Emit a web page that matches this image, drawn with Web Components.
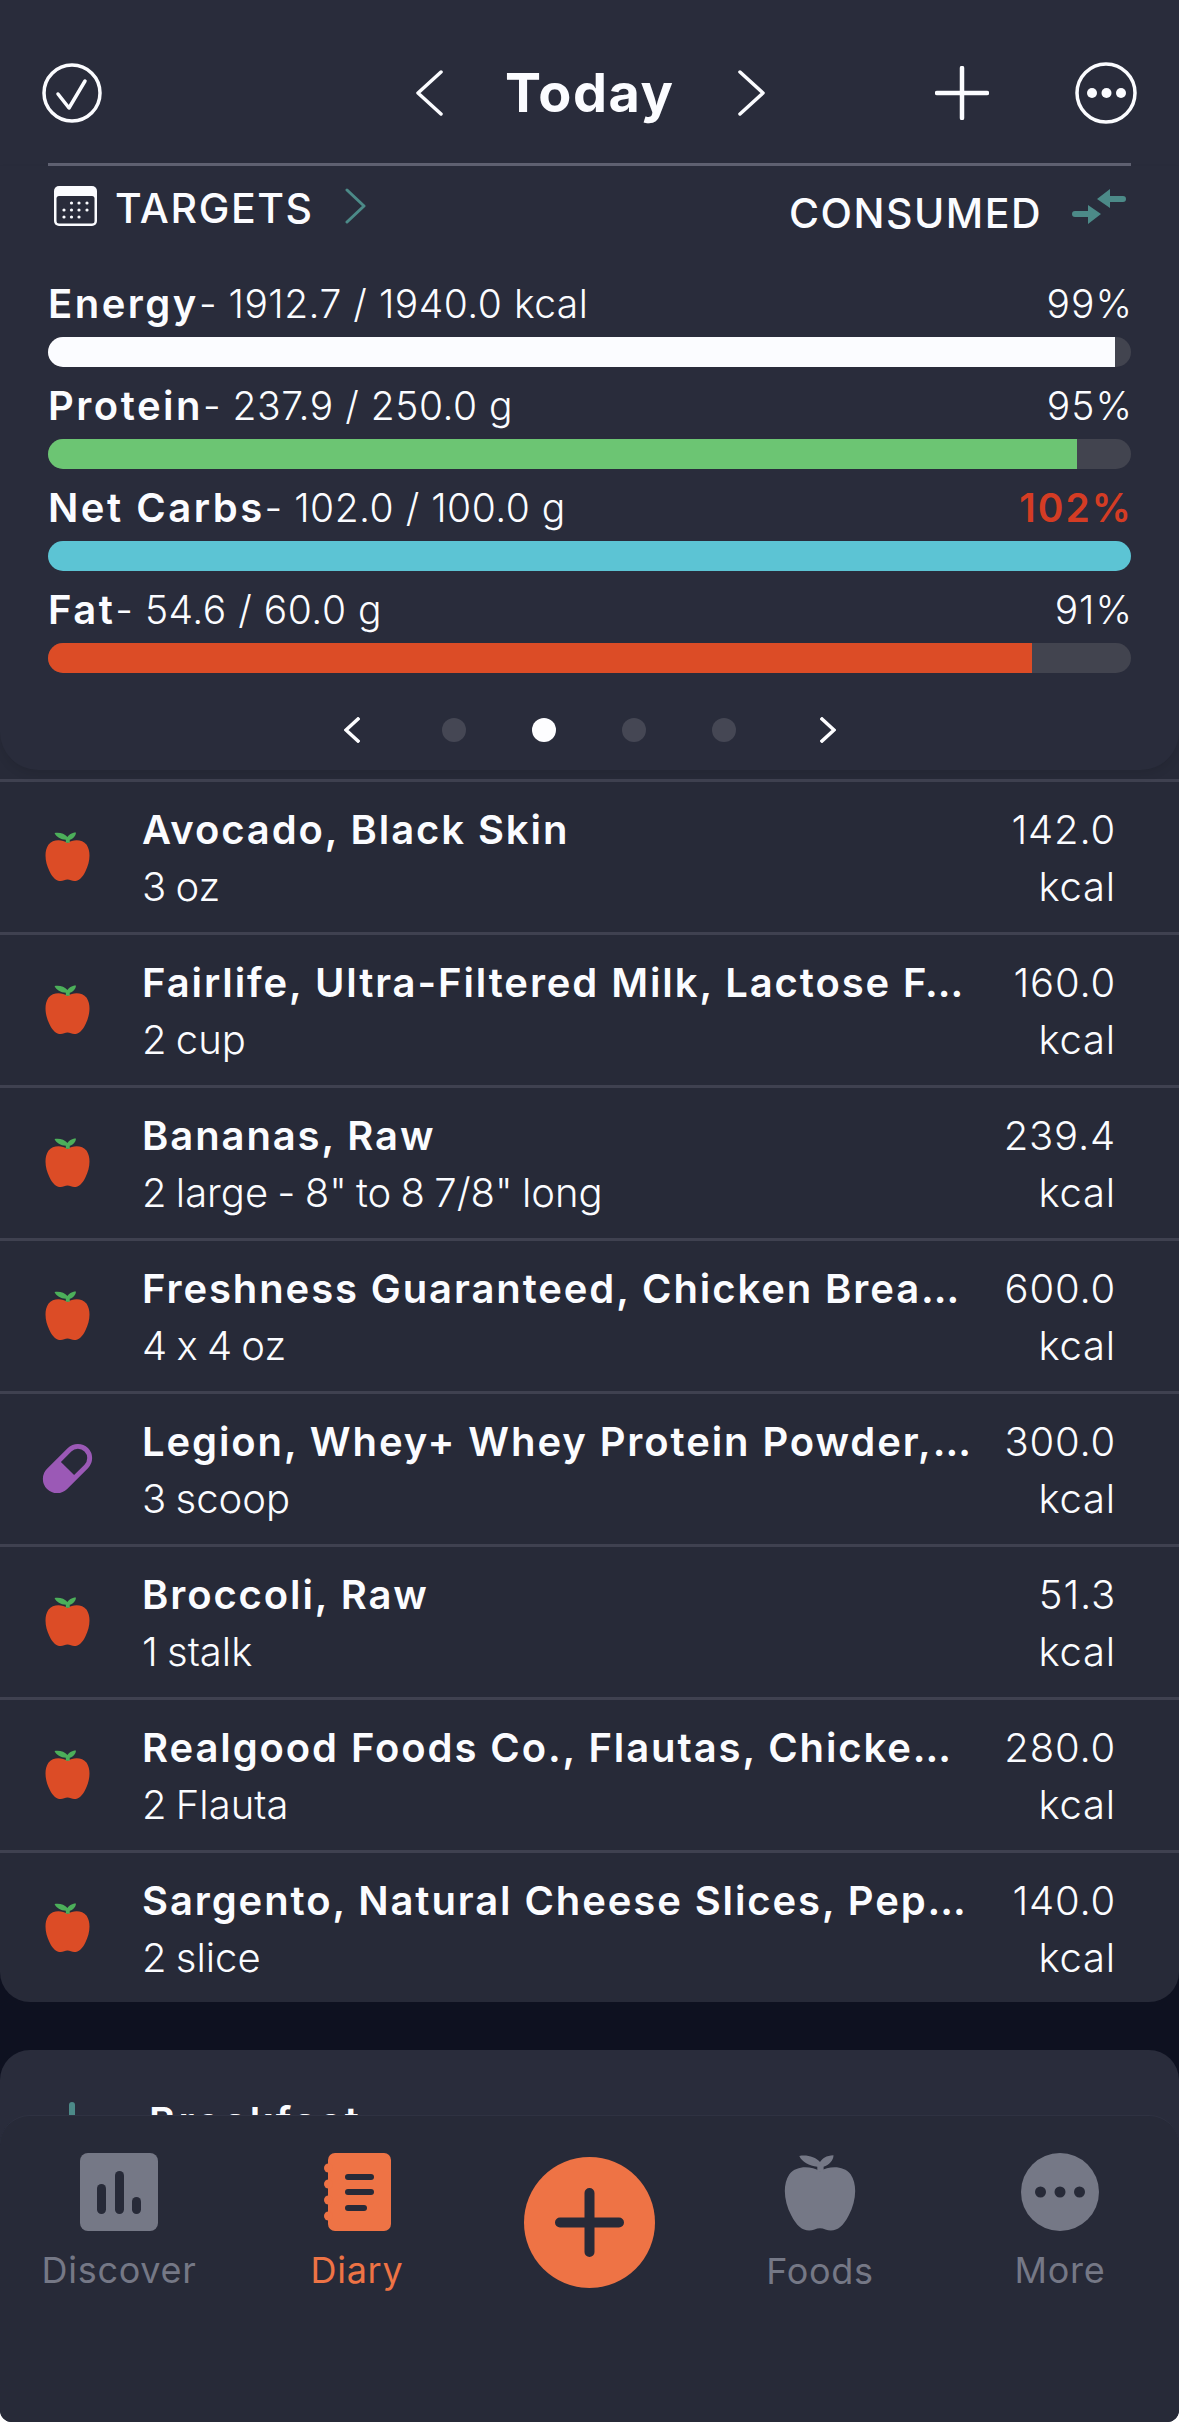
<!DOCTYPE html>
<html>
<head>
<meta charset="utf-8">
<title>Diary</title>
<style>
    html, body { margin: 0; padding: 0; background: #fff; }
    body { font-family: Inter, "Liberation Sans", sans-serif; color: #fbfcff; font-feature-settings: "calt" 0; }
</style>
</head>
<body>

<diary-app>
    <diary-header></diary-header>
    <macro-panel>
        <macro-row name="Energy" amount="1912.7 / 1940.0 kcal" percent="99%" fill="#fbfcff" value="1067"></macro-row>
        <macro-row name="Protein" amount="237.9 / 250.0 g" percent="95%" fill="#6cc573" value="1029"></macro-row>
        <macro-row name="Net Carbs" amount="102.0 / 100.0 g" percent="102%" fill="#5cc4d4" value="1083" over></macro-row>
        <macro-row name="Fat" amount="54.6 / 60.0 g" percent="91%" fill="#dc4c26" value="984"></macro-row>
    </macro-panel>
    <food-list>
        <food-row name="Avocado, Black Skin" serving="3 oz" kcal="142.0"></food-row>
        <food-row name="Fairlife, Ultra-Filtered Milk, Lactose F…" serving="2 cup" kcal="160.0"></food-row>
        <food-row name="Bananas, Raw" serving='2 large - 8" to 8 7/8" long' kcal="239.4"></food-row>
        <food-row name="Freshness Guaranteed, Chicken Brea…" serving="4 x 4 oz" kcal="600.0"></food-row>
        <food-row name="Legion, Whey+ Whey Protein Powder,…" serving="3 scoop" kcal="300.0" kind="pill"></food-row>
        <food-row name="Broccoli, Raw" serving="1 stalk" kcal="51.3"></food-row>
        <food-row name="Realgood Foods Co., Flautas, Chicke…" serving="2 Flauta" kcal="280.0"></food-row>
        <food-row name="Sargento, Natural Cheese Slices, Pep…" serving="2 slice" kcal="140.0"></food-row>
    </food-list>
    <meal-card>Breakfast</meal-card>
    <tab-bar slot="nav">
        <tab-item label="Discover" icon="discover"></tab-item>
        <tab-item label="Diary" icon="diary" active></tab-item>
        <add-button></add-button>
        <tab-item label="Foods" icon="foods"></tab-item>
        <tab-item label="More" icon="more"></tab-item>
    </tab-bar>
</diary-app>

<script>
const APPLE_BODY = "M20 12C15 8.500 7 8 3 14C-1 21 0 32 4 41C7 48 10 51 14 51C16 51 18 49.500 20 49.500C22 49.500 24 51 26 51C30 51 33 48 36 41C40 32 41 21 37 14C33 8 25 8.500 20 12Z";
const APPLE_LEAF = "M18.500 12V9C14 8.500 10 6 8.500 2C12.500 1 17.500 2.500 20 6C21 4 23.500 1.500 27.500 1.500C27.500 5 25 8 22 9V12Z";

const ICONS = {
    discover: `<svg width="78" height="78" viewBox="0 0 78 78"><rect width="78" height="78" rx="8" fill="currentColor"/><g fill="#272a38"><rect x="17" y="31" width="9" height="30" rx="4.500"/><rect x="35" y="18" width="9" height="43" rx="4.500"/><rect x="52" y="44" width="9" height="17" rx="4.500"/></g></svg>`,
    diary: `<svg width="67" height="78" viewBox="0 0 67 78"><rect x="4" width="63" height="78" rx="7" fill="currentColor"/><g fill="currentColor"><circle cx="4.500" cy="15" r="4.500"/><circle cx="4.500" cy="31" r="4.500"/><circle cx="4.500" cy="47" r="4.500"/><circle cx="4.500" cy="63" r="4.500"/></g><g fill="#272a38"><rect x="21" y="21" width="29" height="6" rx="3"/><rect x="21" y="36" width="29" height="6" rx="3"/><rect x="21" y="52" width="22" height="6" rx="3"/></g></svg>`,
    foods: `<svg width="72" height="79" viewBox="0 0 40 52" preserveAspectRatio="none"><path fill="currentColor" d="${APPLE_BODY}"/><path fill="currentColor" d="${APPLE_LEAF}"/></svg>`,
    more: `<svg width="78" height="78" viewBox="0 0 78 78"><circle cx="39" cy="39" r="39" fill="currentColor"/><g fill="#272a38"><circle cx="19.500" cy="39" r="5.500"/><circle cx="39" cy="39" r="5.500"/><circle cx="58.500" cy="39" r="5.500"/></g></svg>`
};

class DiaryApp extends HTMLElement {
    constructor () {
        super ();
        this.attachShadow ({mode: "open"});
        this.shadowRoot.innerHTML = `
<style>
    :host {
        display: flex;
        flex-direction: column;
        height: 2422px;
        overflow: hidden;
        background: #0e1120;
        border-radius: 0 0 12px 12px;
    }
    #content {
        flex: 1;
        min-height: 0;
        overflow: hidden;
    }
</style>
<div id="content"><slot></slot></div>
<slot name="nav"></slot>
`;
    }
}

class DiaryHeader extends HTMLElement {
    constructor () {
        super ();
        this.attachShadow ({mode: "open"});
        this.shadowRoot.innerHTML = `
<style>
    :host {
        display: block;
        background: #292c3b;
        padding: 62px 42px 0 42px;
    }
    #top {
        display: flex;
        align-items: center;
        height: 62px;
    }
    #back { margin-left: 314px; }
    #today {
        font-size: 54px;
        font-weight: 700;
        letter-spacing: 1.5px;
        line-height: 62px;
        width: 169px;
        margin: 0 63px 0 62px;
        text-align: center;
        white-space: nowrap;
    }
    #plus { margin-left: 170px; }
    #more { margin-left: 86px; }
    svg { display: block; flex: none; }
    #rule {
        height: 3px;
        background: #5f6171;
        margin: 39px 6px 0 6px;
    }
</style>
<div id="top">
    <svg width="60" height="60" viewBox="0 0 60 60" fill="none" stroke="#fbfcff" stroke-width="3.500" stroke-linecap="round" stroke-linejoin="round"><circle cx="30" cy="30" r="28"/><path d="M16 31L27 45L43 18"/></svg>
    <svg id="back" width="27" height="46" viewBox="0 0 27 46" fill="none" stroke="#fbfcff" stroke-width="3.500" stroke-linecap="round" stroke-linejoin="round"><path d="M25 2L2 23L25 44"/></svg>
    <span id="today">Today</span>
    <svg width="28" height="46" viewBox="0 0 28 46" fill="none" stroke="#fbfcff" stroke-width="3.500" stroke-linecap="round" stroke-linejoin="round"><path d="M3 2L26 23L3 44"/></svg>
    <svg id="plus" width="54" height="54" viewBox="0 0 54 54" fill="none" stroke="#fbfcff" stroke-width="4.500" stroke-linecap="round"><path d="M27 2V52M2 27H52"/></svg>
    <svg id="more" width="62" height="62" viewBox="0 0 62 62"><circle cx="31" cy="31" r="29" fill="none" stroke="#fbfcff" stroke-width="3.500"/><g fill="#fbfcff"><circle cx="17" cy="31" r="5"/><circle cx="31.500" cy="31" r="5"/><circle cx="46" cy="31" r="5"/></g></svg>
</div>
<div id="rule"></div>
`;
    }
}

class MacroPanel extends HTMLElement {
    constructor () {
        super ();
        this.attachShadow ({mode: "open"});
        this.shadowRoot.innerHTML = `
<style>
    :host {
        display: block;
        position: relative;
        z-index: 1;
        background: #292c3b;
        padding: 0 48px;
        height: 604px;
        box-sizing: border-box;
        border-radius: 0 0 38px 38px;
        box-shadow: 0 5px 8px rgba(0, 0, 0, 0.08);
    }
    #heads {
        display: flex;
        justify-content: space-between;
        height: 108px;
    }
    #targets, #consumed {
        display: flex;
        align-items: center;
        font-size: 41px;
        font-weight: 500;
        line-height: 48px;
        height: 48px;
        letter-spacing: 1.6px;
    }
    #targets { margin: 18px 0 0 6px; }
    #targets span { margin: 0 31px 0 18px; }
    #targets svg { margin-top: -4px; }
    #consumed { margin: 23px 5px 0 0; letter-spacing: 1.5px; }
    #consumed svg { margin: -14px 0 0 30px; }
    svg { display: block; flex: none; }
    #rows {
        display: flex;
        flex-direction: column;
        gap: 9px;
    }
    #pager {
        display: flex;
        align-items: center;
        height: 26px;
        margin: 44px 0 0 296px;
    }
    .dot {
        width: 24px;
        height: 24px;
        border-radius: 50%;
        background: #454754;
        margin-right: 66px;
    }
    .dot.on { background: #fdfdff; }
</style>
<div id="heads">
    <div id="targets">
        <svg width="43" height="40" viewBox="0 0 43 40"><rect width="43" height="40" rx="5" fill="#fbfcff"/><rect x="2.500" y="10" width="38" height="27.500" rx="2.500" fill="#292c3b"/><g fill="#fbfcff"><circle cx="17.500" cy="17" r="1.600"/><circle cx="25" cy="17" r="1.600"/><circle cx="33" cy="17" r="1.600"/><circle cx="10" cy="24" r="1.600"/><circle cx="17.500" cy="24" r="1.600"/><circle cx="25" cy="24" r="1.600"/><circle cx="33" cy="24" r="1.600"/><circle cx="10" cy="31" r="1.600"/><circle cx="17.500" cy="31" r="1.600"/><circle cx="25" cy="31" r="1.600"/></g></svg>
        <span>TARGETS</span>
        <svg width="21" height="36" viewBox="0 0 21 36" fill="none" stroke="#4c8a88" stroke-width="3" stroke-linecap="round" stroke-linejoin="round"><path d="M2 2L19 18L2 34"/></svg>
    </div>
    <div id="consumed">
        <span>CONSUMED</span>
        <svg width="54" height="35" viewBox="0 0 54 35" fill="#4c8a88"><path d="M25 10L38 0V7H51A3 3 0 0 1 51 13H38V19Z"/><path d="M29 25L16 16V22H3A3 3 0 0 0 3 28H16V35Z"/></svg>
    </div>
</div>
<div id="rows"><slot></slot></div>
<div id="pager">
    <svg style="margin-right:82px" width="16" height="26" viewBox="0 0 16 26" fill="none" stroke="#fdfdff" stroke-width="3.500" stroke-linecap="square"><path d="M14 2L2 13L14 24"/></svg>
    <div class="dot"></div>
    <div class="dot on"></div>
    <div class="dot"></div>
    <div class="dot"></div>
    <svg style="margin-left:18px" width="16" height="26" viewBox="0 0 16 26" fill="none" stroke="#fdfdff" stroke-width="3.500" stroke-linecap="square"><path d="M2 2L14 13L2 24"/></svg>
</div>
`;
    }
}

class MacroRow extends HTMLElement {
    constructor () {
        super ();
        this.attachShadow ({mode: "open"});
    }

    connectedCallback () {
        const over = this.hasAttribute ("over");
        const value = this.getAttribute ("value");
        this.shadowRoot.innerHTML = `
<style>
    :host { display: block; }
    #label {
        display: flex;
        align-items: baseline;
        font-size: 39px;
        line-height: 60px;
        font-weight: 300;
        white-space: pre;
    }
    b { font-size: 40px; font-weight: 600; letter-spacing: 2.5px; }
    #amount { letter-spacing: 0.5px; }
    #percent { margin-left: auto; margin-right: -2px; letter-spacing: 1px; }
    #percent.over { color: #d43c24; font-weight: 600; letter-spacing: 2px; }
    #track {
        height: 30px;
        margin-top: 3px;
        border-radius: 15px;
        background: #42444f;
        overflow: hidden;
    }
    #fill {
        height: 100%;
        width: ${value}px;
        background: ${this.getAttribute ("fill")};
    }
</style>
<div id="label"><b>${this.getAttribute ("name")}</b><span id="amount">- ${this.getAttribute ("amount")}</span><span id="percent" class="${over ? "over" : ""}">${this.getAttribute ("percent")}</span></div>
<div id="track"><div id="fill"></div></div>
`;
    }
}

class FoodList extends HTMLElement {
    constructor () {
        super ();
        this.attachShadow ({mode: "open"});
        this.shadowRoot.innerHTML = `
<style>
    :host {
        display: block;
        margin-top: -40px;
        padding-top: 49px;
        background: #272a38;
        border-radius: 0 0 30px 30px;
        overflow: hidden;
    }
    ::slotted(food-row:last-child) { height: 152px; }
</style>
<slot></slot>
`;
    }
}

class FoodRow extends HTMLElement {
    constructor () {
        super ();
        this.attachShadow ({mode: "open"});
    }

    connectedCallback () {
        const icon = this.getAttribute ("kind") == "pill"
            ? `<svg style="margin-left:-3px" width="51" height="51" viewBox="0 0 52 52"><g transform="rotate(-45 26 26)"><rect x="-3.500" y="11.500" width="59" height="29" rx="14.500" fill="#9b59b6"/><path d="M26 16.500H41A9.500 9.500 0 0 1 41 35.500H26Z" fill="#272a38"/></g></svg>`
            : `<svg width="45" height="51" viewBox="0 0 40 52" preserveAspectRatio="none"><path fill="#dc4c26" d="${APPLE_BODY}"/><path fill="#4caf5a" d="${APPLE_LEAF}"/></svg>`;
        this.shadowRoot.innerHTML = `
<style>
    :host {
        display: flex;
        align-items: flex-start;
        box-sizing: border-box;
        height: 153px;
        padding: 19px 64px 0 45px;
        border-top: 3px solid #3f4150;
        line-height: 57px;
        font-size: 40px;
    }
    #icon {
        flex: none;
        width: 97px;
        margin-top: 30px;
    }
    #icon svg { display: block; }
    #text { flex: 1; min-width: 0; white-space: nowrap; }
    #name { font-weight: 600; letter-spacing: 1.9px; }
    #serving, #kcal { font-weight: 300; }
    #serving { word-spacing: -2px; }
    #kcal { flex: none; text-align: right; letter-spacing: 0.8px; margin-right: -1px; }
</style>
<div id="icon">${icon}</div>
<div id="text">
    <div id="name">${this.getAttribute ("name")}</div>
    <div id="serving">${this.getAttribute ("serving")}</div>
</div>
<div id="kcal">${this.getAttribute ("kcal")}<br>kcal</div>
`;
    }
}

class MealCard extends HTMLElement {
    constructor () {
        super ();
        this.attachShadow ({mode: "open"});
        this.shadowRoot.innerHTML = `
<style>
    :host {
        display: flex;
        margin-top: 48px;
        height: 200px;
        padding: 52px 0 0 69px;
        box-sizing: border-box;
        background: #292c3b;
        border-radius: 30px 30px 0 0;
    }
    #bar { width: 6px; height: 40px; background: #4c8a88; border-radius: 3px; }
    #title {
        margin: -9px 0 0 74px;
        font-size: 40px;
        font-weight: 600;
        letter-spacing: 3.1px;
        line-height: 57px;
    }
</style>
<div id="bar"></div>
<div id="title"><slot></slot></div>
`;
    }
}

class TabBar extends HTMLElement {
    constructor () {
        super ();
        this.attachShadow ({mode: "open"});
        this.shadowRoot.innerHTML = `
<style>
    :host {
        display: flex;
        flex: none;
        align-items: flex-start;
        box-sizing: border-box;
        height: 307px;
        margin-top: -30px;
        position: relative;
        padding-top: 37px;
        background: #272a38;
        border-top: 1px solid #2f3242;
        border-radius: 30px 30px 0 0;
    }
</style>
<slot></slot>
`;
    }
}

class TabItem extends HTMLElement {
    constructor () {
        super ();
        this.attachShadow ({mode: "open"});
    }

    connectedCallback () {
        const active = this.hasAttribute ("active");
        const name = this.getAttribute ("icon");
        this.shadowRoot.innerHTML = `
<style>
    :host {
        display: flex;
        flex: none;
        flex-direction: column;
        align-items: center;
        width: 240px;
        margin-left: ${{discover: -1, diary: -2, foods: 45, more: 0}[name]}px;
        color: ${active ? "#ee7345" : "#757886"};
    }
    svg { display: block; }
    #label {
        font-size: 36px;
        line-height: 42px;
        margin-top: 18px;
        letter-spacing: 0.7px;
    }
</style>
${ICONS[name]}
<div id="label">${this.getAttribute ("label")}</div>
`;
    }
}

class AddButton extends HTMLElement {
    constructor () {
        super ();
        this.attachShadow ({mode: "open"});
        this.shadowRoot.innerHTML = `
<style>
    :host {
        display: block;
        flex: none;
        width: 131px;
        height: 131px;
        margin: 4px 0 0 47px;
        border-radius: 50%;
        background: #ee7345;
    }
    svg { display: block; }
</style>
<svg width="131" height="131" viewBox="0 0 131 131" fill="none" stroke="#272a38" stroke-width="10" stroke-linecap="round"><path d="M65.500 36V95M36 65.500H95"/></svg>
`;
    }
}

customElements.define ("diary-app", DiaryApp);
customElements.define ("diary-header", DiaryHeader);
customElements.define ("macro-panel", MacroPanel);
customElements.define ("macro-row", MacroRow);
customElements.define ("food-list", FoodList);
customElements.define ("food-row", FoodRow);
customElements.define ("meal-card", MealCard);
customElements.define ("tab-bar", TabBar);
customElements.define ("tab-item", TabItem);
customElements.define ("add-button", AddButton);
</script>
</body>
</html>
